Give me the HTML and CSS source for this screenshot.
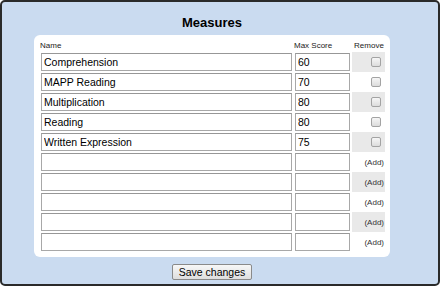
FILE: index.html
```html
<!DOCTYPE html>
<html lang="en">
<head>
    <meta charset="UTF-8">
    <meta name="viewport" content="width=device-width, initial-scale=1.0">
    <title>Measures</title>
    <link rel="stylesheet" href="styles.css">
</head>
<body>
    <div class="frame">
        <div class="wrap">
            <h1>Measures</h1>
            <div class="panel">
                <div class="grid">
                    <div class="head">Name</div>
                    <div class="head">Max Score</div>
                    <div class="head center">Remove</div>

                    <input type="text" class="name" value="Comprehension">
                    <input type="text" class="score" value="60">
                    <div class="act shade"><input type="checkbox"></div>

                    <input type="text" class="name" value="MAPP Reading">
                    <input type="text" class="score" value="70">
                    <div class="act"><input type="checkbox"></div>

                    <input type="text" class="name" value="Multiplication">
                    <input type="text" class="score" value="80">
                    <div class="act shade"><input type="checkbox"></div>

                    <input type="text" class="name" value="Reading">
                    <input type="text" class="score" value="80">
                    <div class="act"><input type="checkbox"></div>

                    <input type="text" class="name" value="Written Expression">
                    <input type="text" class="score" value="75">
                    <div class="act shade"><input type="checkbox"></div>

                    <input type="text" class="name">
                    <input type="text" class="score">
                    <div class="act"><span class="add">(Add)</span></div>

                    <input type="text" class="name">
                    <input type="text" class="score">
                    <div class="act shade"><span class="add">(Add)</span></div>

                    <input type="text" class="name">
                    <input type="text" class="score">
                    <div class="act"><span class="add">(Add)</span></div>

                    <input type="text" class="name">
                    <input type="text" class="score">
                    <div class="act shade"><span class="add">(Add)</span></div>

                    <input type="text" class="name">
                    <input type="text" class="score">
                    <div class="act"><span class="add">(Add)</span></div>
                </div>
            </div>
            <div class="actions">
                <button type="button">Save changes</button>
            </div>
        </div>
    </div>
</body>
</html>
```

FILE: styles.css
```css
body {
    margin: 0;
    font-family: "Liberation Sans", Arial, sans-serif;
    color: #000;
}
.frame {
    box-sizing: border-box;
    width: 440px;
    height: 286px;
    border: 2px solid #2a2a2a;
    border-radius: 5px;
    background-color: #cadbf0;
}
.wrap {
    width: 356px;
    margin-left: 32px;
}
h1 {
    margin: 0;
    padding-top: 13px;
    font-size: 13px;
    line-height: 16px;
    text-align: center;
}
.panel {
    margin-top: 4px;
    padding: 5px 5px 5px 7px;
    background-color: #ffffff;
    border-radius: 6px;
}
.grid {
    display: grid;
    grid-template-columns: 251px 55px 32px;
    grid-auto-rows: 20px;
    grid-template-rows: 12px;
    column-gap: 3px;
}
.head {
    font-size: 8px;
    line-height: 12px;
    color: #222;
    margin-left: -1px;
}
.head.center {
    text-align: center;
    margin-left: 0;
}
input[type="text"] {
    box-sizing: border-box;
    height: 18px;
    margin: 1px 0;
    padding: 0 2px;
    border: 1px solid #a8a8a8;
    border-top-color: #979797;
    font-family: "Liberation Sans", Arial, sans-serif;
    font-size: 10.5px;
    color: #000;
    background-color: #fff;
    outline: none;
}
.name {
    width: 251px;
}
.score {
    width: 55px;
}
.act {
    display: flex;
    align-items: center;
    justify-content: flex-end;
    margin-left: -1px;
}
.shade {
    background-color: #e9e9e9;
}
.act input[type="checkbox"] {
    appearance: none;
    -webkit-appearance: none;
    box-sizing: border-box;
    width: 10px;
    height: 10px;
    margin: 0 4px 0 0;
    border: 1px solid #a3a3a3;
    border-radius: 2px;
    background: linear-gradient(#f6f6f6, #dcdcdc);
}
.add {
    font-size: 8px;
    color: #333;
    padding-right: 1px;
}
.actions {
    margin-top: 5px;
    text-align: center;
}
button {
    height: 16px;
    padding: 0 6px;
    font-family: "Liberation Sans", Arial, sans-serif;
    font-size: 10.5px;
    line-height: 14px;
    color: #000;
    background: linear-gradient(#f7f7f7, #dedede);
    border: 1px solid #8a8a8a;
    border-radius: 2px;
}
```
